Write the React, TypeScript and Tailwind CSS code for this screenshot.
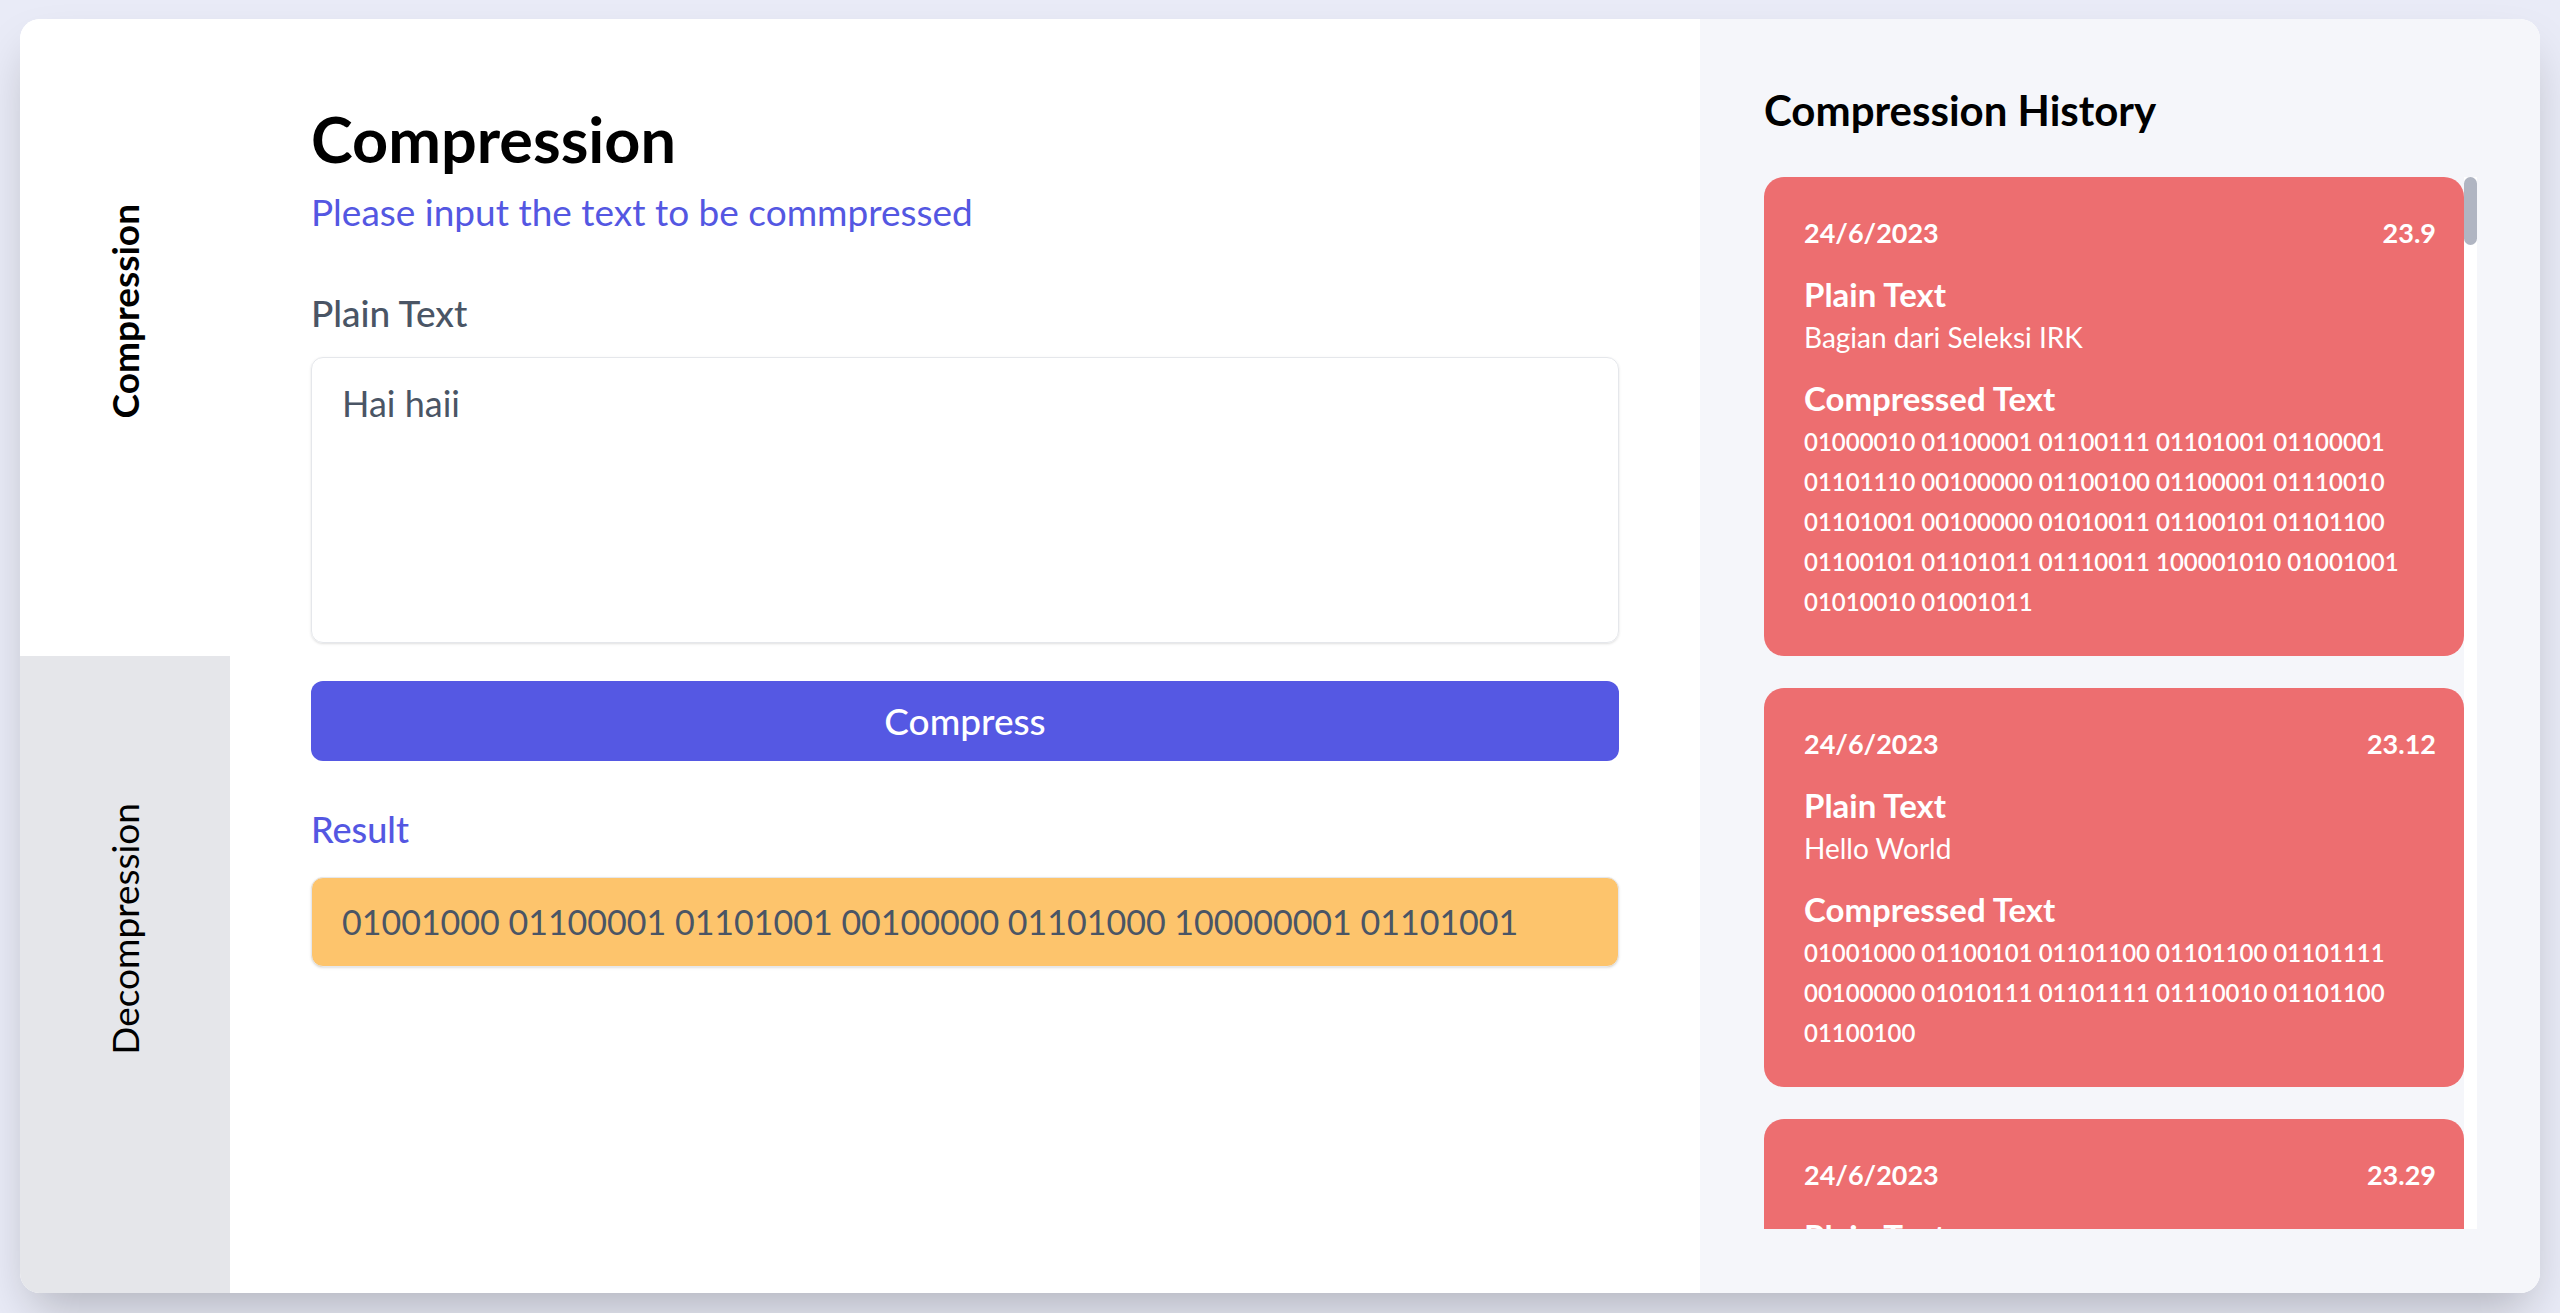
import { useState } from "react"

type HistoryItem = {
  date: string
  time: string
  plain: string
  compressed: string
}

const history: HistoryItem[] = [
  {
    date: "24/6/2023",
    time: "23.9",
    plain: "Bagian dari Seleksi IRK",
    compressed:
      "01000010 01100001 01100111 01101001 01100001 01101110 00100000 01100100 01100001 01110010 01101001 00100000 01010011 01100101 01101100 01100101 01101011 01110011 100001010 01001001 01010010 01001011",
  },
  {
    date: "24/6/2023",
    time: "23.12",
    plain: "Hello World",
    compressed:
      "01001000 01100101 01101100 01101100 01101111 00100000 01010111 01101111 01110010 01101100 01100100",
  },
  {
    date: "24/6/2023",
    time: "23.29",
    plain: "Hai haii",
    compressed: "01001000 01100001 01101001 00100000 01101000 100000001 01101001",
  },
]

const HistoryCard = ({ item }: { item: HistoryItem }) => (
  <div className="shrink-0 rounded-[20px] bg-[#ed6e70] pl-10 pr-7 pt-[38px] pb-[34px] text-white">
    <div className="flex items-center justify-between text-[27px] font-bold leading-[36px]">
      <span>{item.date}</span>
      <span>{item.time}</span>
    </div>
    <h3 className="mt-[23px] text-[33px] font-bold leading-[40px]">Plain Text</h3>
    <p className="mt-[7px] text-[28px] leading-[32px]">{item.plain}</p>
    <h3 className="mt-[25px] text-[33px] font-bold leading-[40px]">Compressed Text</h3>
    <p className="mt-[4px] text-[24px] font-semibold leading-[40px]">{item.compressed}</p>
  </div>
)

export default function App() {
  const [tab, setTab] = useState<"compression" | "decompression">("compression")
  const [plain, setPlain] = useState("Hai haii")
  const result = "01001000 01100001 01101001 00100000 01101000 100000001 01101001"

  return (
    <div className="min-h-screen bg-[#e9ebf7] px-5 pt-[19px] pb-5 font-[Lato,sans-serif]">
      <div className="flex h-[1274px] overflow-hidden rounded-[20px] bg-white shadow-2xl">
        {/* tabs */}
        <div className="flex w-[210px] flex-col">
          <button
            onClick={() => setTab("compression")}
            className={`flex flex-1 flex-col items-center justify-end pb-[238px] ${tab === "compression" ? "bg-white font-bold" : "bg-[#e5e6ea]"}`}
          >
            <span className="rotate-180 text-[37px] leading-[48px] text-black [writing-mode:vertical-rl]">Compression</span>
          </button>
          <button
            onClick={() => setTab("decompression")}
            className={`flex flex-1 flex-col items-center justify-end pb-[238px] ${tab === "decompression" ? "bg-white font-bold" : "bg-[#e5e6ea]"}`}
          >
            <span className="rotate-180 text-[37px] leading-[48px] text-black [writing-mode:vertical-rl]">Decompression</span>
          </button>
        </div>

        {/* form */}
        <div className="flex flex-1 flex-col px-[81px] pt-[84px]">
          <h1 className="text-[63px] font-bold leading-[72px] text-black">Compression</h1>
          <p className="mt-[13px] text-[37px] leading-[48px] text-[#5457e2]">Please input the text to be commpressed</p>
          <label className="mt-[53px] text-[37px] font-medium leading-[48px] text-gray-600">Plain Text</label>
          <textarea
            value={plain}
            onChange={(e) => setPlain(e.target.value)}
            className="mt-[20px] h-[286px] resize-none rounded-xl border border-gray-200 px-[30px] pt-[21px] text-[36px] leading-[48px] text-gray-600 shadow-sm outline-none"
          />
          <button className="mt-[38px] h-[80px] rounded-xl bg-[#5558e3] text-[37px] font-medium text-white">Compress</button>
          <p className="mt-[44px] text-[36px] font-medium leading-[48px] text-[#5457e2]">Result</p>
          <div className="mt-[24px] flex h-[90px] items-center rounded-xl border border-gray-200 bg-[#fdc46c] px-[30px] text-[34px] leading-[48px] text-gray-600 shadow-sm">
            {result}
          </div>
        </div>

        {/* history */}
        <div className="flex w-[840px] flex-col bg-[#f5f6fa] pl-16 pr-[63px] pt-[67px] pb-16">
          <h2 className="text-[42px] font-bold leading-[48px] text-black">Compression History</h2>
          <div className="mt-[43px] flex min-h-0 flex-1">
            <div className="flex min-w-0 flex-1 flex-col gap-8 overflow-hidden">
              {history.map((item, i) => (
                <HistoryCard key={i} item={item} />
              ))}
            </div>
            {/* scrollbar */}
            <div className="w-[13px] bg-white">
              <div className="h-[68px] rounded-full bg-[#b0b5c2]" />
            </div>
          </div>
        </div>
      </div>
    </div>
  )
}
